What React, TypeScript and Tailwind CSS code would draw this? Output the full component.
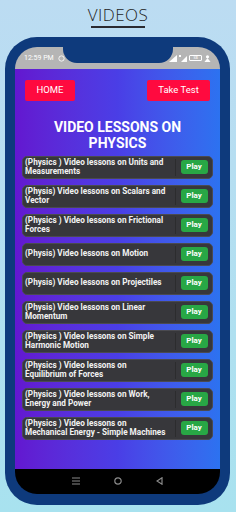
import React from 'react';

const lessons: string[] = [
  '(Physics ) Video lessons on Units and Measurements',
  '(Physis) Video lessons on Scalars and Vector',
  '(Physics ) Video lessons on Frictional Forces',
  '(Physis) Video lessons on Motion',
  '(Physis) Video lessons on Projectiles',
  '(Physis) Video lessons on Linear Momentum',
  '(Physics ) Video lessons on Simple Harmonic Motion',
  '(Physics ) Video lessons on Equilibrium of Forces',
  '(Physics ) Video lessons on Work, Energy and Power',
  '(Physics ) Video lessons on Mechanical Energy - Simple Machines',
];

function StatusBar() {
  return (
    <div className="relative h-[22px] bg-[#b5b5b5] flex items-center justify-between px-[9px] pt-[1px]">
      <div className="flex items-center gap-[4px] text-[7px] text-white font-['Roboto',sans-serif]">
        <span>12:59 PM</span>
        <svg width="7" height="7" viewBox="0 0 10 10" fill="none" stroke="white" strokeWidth="1.2">
          <circle cx="5" cy="5" r="3.8" />
        </svg>
      </div>
      <div className="flex items-center gap-[2px]">
        <svg width="8" height="7" viewBox="0 0 8 7" fill="white">
          <path d="M0 7 L8 0 L8 7 Z" />
        </svg>
        <svg width="8" height="7" viewBox="0 0 8 7" fill="white">
          <path d="M2 7 L8 1 L8 7 Z" />
          <rect x="0" y="0" width="2" height="2" />
        </svg>
        <div className="w-[13px] h-[6px] border border-white rounded-[1px] flex items-center justify-center text-[4px] text-white">
          38
        </div>
        <svg width="7" height="7" viewBox="0 0 8 8" fill="white">
          <circle cx="4" cy="2" r="1.8" />
          <path d="M0.5 8 L4 3.5 L7.5 8 Z" />
        </svg>
      </div>
      <div className="absolute left-[48px] top-0 w-[110px] h-[16px] bg-[#0e3a7c] rounded-b-[14px]" />
    </div>
  );
}

function LessonRow({ title }: { title: string }) {
  return (
    <div className="h-[23px] flex items-stretch bg-[#37373b] rounded-[5px] border border-[#4a4a50]">
      <div className="flex-1 flex items-center pl-[2px] pr-[9px] text-[8.2px] leading-[9.5px] font-bold text-[#f2f2f2] font-['Roboto',sans-serif]">
        {title}
      </div>
      <div className="w-[1px] bg-[#2c2c2e] my-[2px]" />
      <div className="w-[36px] flex items-center justify-center">
        <div className="w-[27px] h-[14px] rounded-[3px] bg-[#28a745] flex items-center justify-center text-white text-[8px] font-bold font-['Roboto',sans-serif]">
          Play
        </div>
      </div>
    </div>
  );
}

export default function App() {
  return (
    <div className="w-[236px] h-[512px] bg-gradient-to-b from-[#bcdcf2] to-[#a8e2ef] flex flex-col items-center overflow-hidden">
      <div className="mt-[5px] flex flex-col items-center">
        <div className="text-[17px] leading-[20px] font-light tracking-[0.5px] text-[#1e1e24] font-['Open_Sans',sans-serif]">
          VIDEOS
        </div>
        <div className="w-[54px] h-[1.5px] bg-[#2a2a30] mt-[1px]" />
      </div>

      <div className="mt-[9px] w-[225px] h-[468px] ml-[-1px] bg-[#0e3a7c] rounded-[32px] p-[10px] pb-[11px]">
        <div className="w-full h-full rounded-[22px] overflow-hidden flex flex-col">
          <StatusBar />
          <div className="flex-1 bg-gradient-to-r from-[#6317d0] via-[#4a3ee6] to-[#2c72f0] flex flex-col px-[7px]">
            <div className="flex justify-between px-[3px] pt-[11px]">
              <div className="w-[50px] h-[21px] bg-[#ff0a3f] rounded-[2px] flex items-center justify-center text-white text-[9.5px] font-['Roboto',sans-serif]">
                HOME
              </div>
              <div className="w-[63px] h-[21px] bg-[#ff0a3f] rounded-[2px] flex items-center justify-center text-white text-[9.5px] font-['Roboto',sans-serif]">
                Take Test
              </div>
            </div>
            <div className="mt-[18px] text-center text-white font-bold text-[14px] leading-[16px] font-['Roboto',sans-serif]">
              VIDEO LESSONS ON
              <br />
              PHYSICS
            </div>
            <div className="mt-[5px] flex flex-col gap-[6px]">
              {lessons.map((t) => (
                <LessonRow key={t} title={t} />
              ))}
            </div>
          </div>
          <div className="h-[25px] bg-black flex items-center justify-around px-[40px]">
            <svg width="8" height="8" viewBox="0 0 8 8" stroke="#8a8a8a" strokeWidth="1.2">
              <path d="M0 1 H8 M0 4 H8 M0 7 H8" />
            </svg>
            <svg width="8" height="8" viewBox="0 0 8 8" fill="none" stroke="#8a8a8a" strokeWidth="1.2">
              <circle cx="4" cy="4" r="3.2" />
            </svg>
            <svg width="7" height="8" viewBox="0 0 7 8" fill="none" stroke="#8a8a8a" strokeWidth="1.2">
              <path d="M6 0.8 L1 4 L6 7.2 Z" />
            </svg>
          </div>
        </div>
      </div>
    </div>
  );
}
